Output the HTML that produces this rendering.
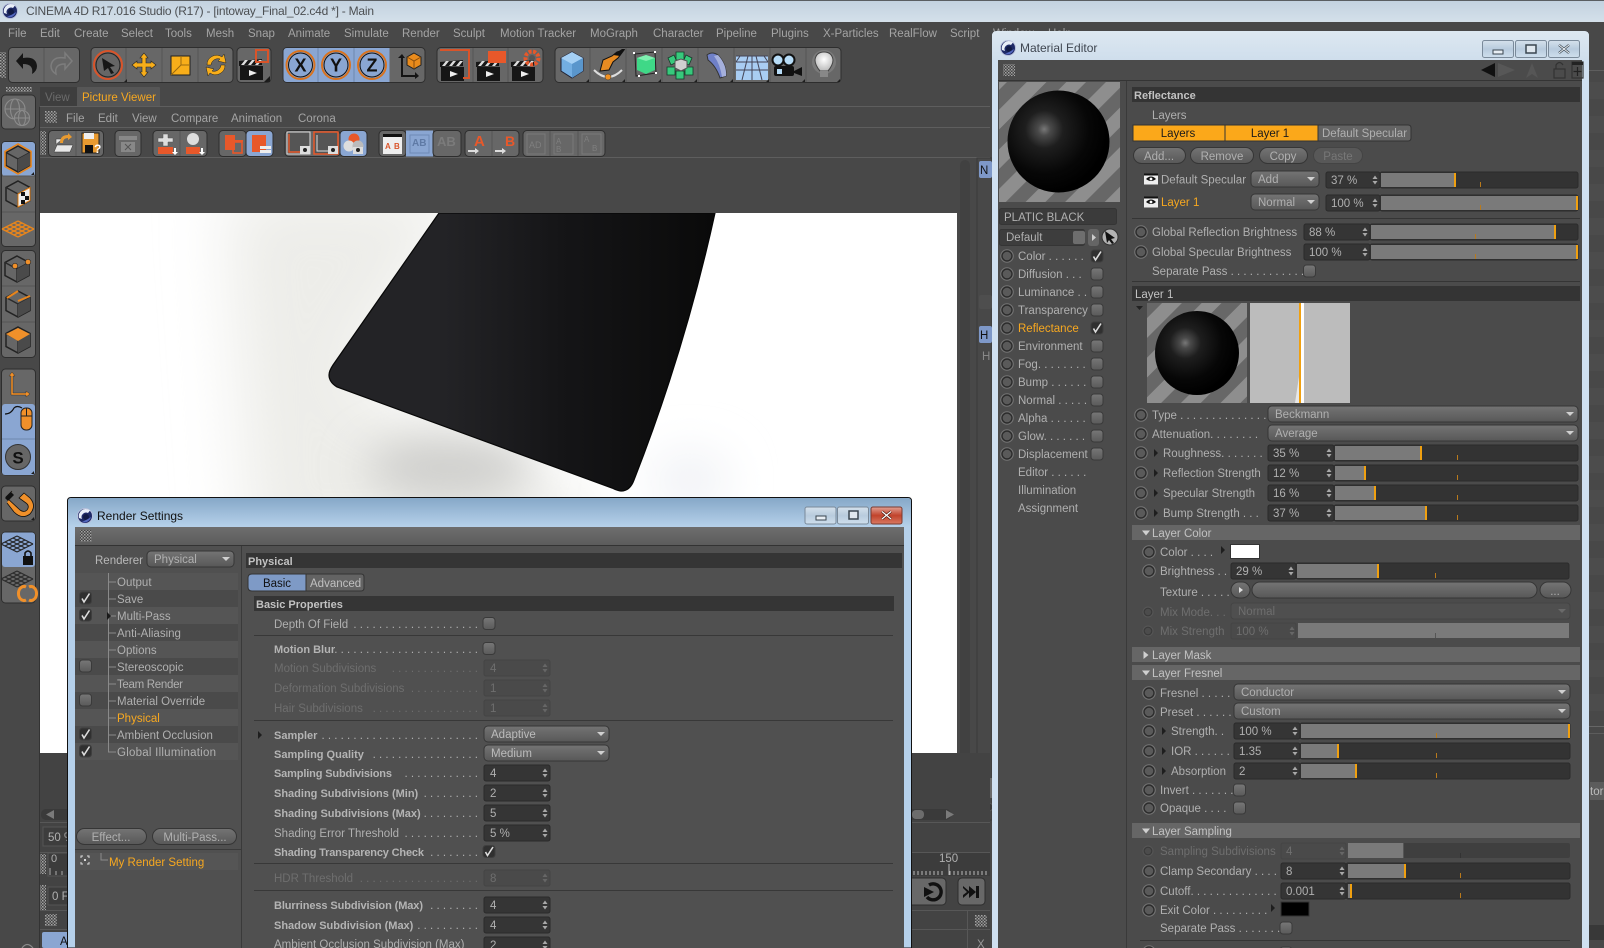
<!DOCTYPE html>
<html><head><meta charset="utf-8"><title>CINEMA 4D</title>
<style>
html,body{margin:0;padding:0;background:#484848;overflow:hidden}
svg{display:block;position:absolute;left:0;top:0}
text{font-family:"Liberation Sans",sans-serif;font-size:11.5px;fill:#b0b0b0}
.m{fill:#a4a4a4}.o{fill:#f7a820}.dim{fill:#6e6e6e}.b{font-weight:bold;font-size:11px;fill:#b4b4b4}
.h{fill:#c2c2c2}.dk{fill:#161616}
.tb{fill:#676767;stroke:#2e2e2e;stroke-width:1}
.dv{stroke:#565656;stroke-width:1}
.fd{fill:#353535;stroke:#2a2a2a}.fx{fill:#4a4a4a;stroke:#444}
.sd{fill:#333;stroke:#2b2b2b}.sf{fill:#7a7a7a}.sh{fill:#f0a010}.st{fill:#b97a1c}
.dp{fill:url(#gd);stroke:#363636}.pl{fill:url(#gd);stroke:#363636}
.hd{fill:#343434}.hl{fill:#666}
.sp{stroke:#353535;stroke-width:1}
</style></head><body>
<svg width="1604" height="948" viewBox="0 0 1604 948" xmlns="http://www.w3.org/2000/svg">
<defs>
<linearGradient id="gd" x1="0" y1="0" x2="0" y2="1"><stop offset="0" stop-color="#747474"/><stop offset="1" stop-color="#585858"/></linearGradient>
<linearGradient id="gc" x1="0" y1="0" x2="0" y2="1"><stop offset="0" stop-color="#777"/><stop offset="1" stop-color="#5a5a5a"/></linearGradient>
<linearGradient id="tt" x1="0" y1="0" x2="0" y2="1"><stop offset="0" stop-color="#c2d1df"/><stop offset="1" stop-color="#d4e0ea"/></linearGradient>
<linearGradient id="tm" x1="0" y1="0" x2="0" y2="1"><stop offset="0" stop-color="#dde8f1"/><stop offset="1" stop-color="#cfdeec"/></linearGradient>
<linearGradient id="tr" x1="0" y1="0" x2="0" y2="1"><stop offset="0" stop-color="#86a8c8"/><stop offset="1" stop-color="#b6d1ea"/></linearGradient>
<linearGradient id="tl" x1="0" y1="0" x2="0" y2="1"><stop offset="0" stop-color="#6e6e6e"/><stop offset="1" stop-color="#5c5c5c"/></linearGradient>
<linearGradient id="wb" x1="0" y1="0" x2="0" y2="1"><stop offset="0" stop-color="#d5e1ec"/><stop offset=".5" stop-color="#b8cbdd"/><stop offset="1" stop-color="#cfdfed"/></linearGradient>
<linearGradient id="wr" x1="0" y1="0" x2="0" y2="1"><stop offset="0" stop-color="#e2a194"/><stop offset=".5" stop-color="#c1432c"/><stop offset="1" stop-color="#d97a63"/></linearGradient>
<linearGradient id="bl" x1="0" y1="0" x2="1" y2="0"><stop offset="0" stop-color="#232326"/><stop offset=".3" stop-color="#232326"/><stop offset=".6" stop-color="#151517"/><stop offset="1" stop-color="#0a0a0a"/></linearGradient>
<radialGradient id="sph" cx=".36" cy=".38" r=".62"><stop offset="0" stop-color="#787878"/><stop offset=".1" stop-color="#4a4a4a"/><stop offset=".3" stop-color="#1e1e1e"/><stop offset=".7" stop-color="#070707"/><stop offset="1" stop-color="#000"/></radialGradient>
<radialGradient id="bulb" cx=".5" cy=".4" r=".6"><stop offset="0" stop-color="#fff"/><stop offset="1" stop-color="#bbb"/></radialGradient>
<pattern id="st" width="28" height="28" patternUnits="userSpaceOnUse" patternTransform="rotate(45)"><rect width="28" height="28" fill="#676767"/><rect width="14" height="28" fill="#8e8e8e"/></pattern>
<pattern id="gp" width="3" height="3" patternUnits="userSpaceOnUse"><rect width="3" height="3" fill="#444"/><rect width="1.5" height="1.5" fill="#a5a5a5"/><rect x="1.5" y="1.5" width="1.5" height="1.5" fill="#8a8a8a"/></pattern>
<filter id="bl1" x="-50%" y="-50%" width="200%" height="200%"><feGaussianBlur stdDeviation="32"/></filter>
<filter id="bl2" x="-60%" y="-80%" width="220%" height="260%"><feGaussianBlur stdDeviation="22"/></filter>
<g id="rd"><circle r="6.8" fill="#747474"/><circle r="5" fill="#5a5a5a" stroke="#2c2c2c" stroke-width="1.4"/></g>
<g id="rx"><circle r="5.5" fill="#565656"/><circle r="3.8" fill="#4c4c4c" stroke="#3a3a3a" stroke-width="1.2"/></g>
<g id="cb"><rect x="-6" y="-6" width="12" height="12" rx="3" fill="url(#gc)" stroke="#3a3a3a"/></g>
<g id="ck"><rect x="-6" y="-6" width="12" height="12" rx="3" fill="#303030" stroke="#3e3e3e"/><path d="M-3.5 .5L-1.5 4L4 -4.5" fill="none" stroke="#ddd" stroke-width="1.6"/></g>
<g id="sp"><path d="M-2.5 -1L0 -4.5L2.5 -1ZM-2.5 1L0 4.5L2.5 1Z" fill="#a8a8a8"/></g>
<g id="spx"><path d="M-2.5 -1L0 -4.5L2.5 -1ZM-2.5 1L0 4.5L2.5 1Z" fill="#666"/></g>
<g id="dd"><path d="M-4 -2H4L0 2Z" fill="#d0d0d0"/></g>
<g id="ddx"><path d="M-4 -2H4L0 2Z" fill="#6a6a6a"/></g>
<g id="ar"><path d="M-2 -4L2 0L-2 4Z" fill="#1e1e1e"/></g>
<g id="trd"><path d="M-4 -2.5H4L0 2.5Z" fill="#d0d0d0"/></g>
<g id="trr"><path d="M-2.5 -4L2.5 0L-2.5 4Z" fill="#d0d0d0"/></g>
<g id="eye"><rect x="-7" y="-5.5" width="14" height="11" fill="#eee"/><path d="M-7 -5.5H7V-3.5H-7Z" fill="#111"/><path d="M-5 0Q0 -5 5 0Q0 4 -5 0Z" fill="#111"/><circle r="1.4" fill="#fff"/></g>
<g id="logo"><circle r="7.5" fill="#1f2a66"/><circle r="7.5" fill="none" stroke="#b8c0dc" stroke-width="1"/><path d="M-6 2A7 7 0 0 1 5 -5.5L3 -3A4.5 4.5 0 0 0 -3 3Z" fill="#e8eef8"/><circle cx="1" cy="1" r="3" fill="#111a44"/><path d="M-3 6A7 7 0 0 0 6 1L3 3Z" fill="#5468c0"/></g>
<g id="cube"><path d="M0 -13L12 -6.5V6.5L0 13L-12 6.5V-6.5Z" fill="#666" stroke="#222" stroke-width="1.5"/><path d="M-12 -6.5L0 0L12 -6.5M0 0V13" fill="none" stroke="#2a2a2a" stroke-width="1.4"/><path d="M0 0L12 -6.5V6.5L0 13Z" fill="#4a4a4a"/></g>
<g id="gridp" fill="none"><path d="M-16 0L0-8M-12 2L4-6M-8 4L8-4M-4 6L12-2M0 8L16 0M-16 0L0 8M-12-2L4 6M-8-4L8 4M-4-6L12 2M0-8L16 0"/></g>
<g id="clap"><rect x="-11" y="-2" width="23" height="14" fill="#161616"/><path d="M-12 -7L11 -9V-3L-12 -2Z" fill="#161616"/><path d="M-10 -3L-6 -8H-3L-7 -3ZM-3 -3L1 -8H4L0 -3ZM4 -3L8 -8H11L7 -3Z" fill="#ddd"/><path d="M-2 2L6 5L-2 8Z" fill="#eee"/></g>
<g id="mn"><rect x="-15.5" y="-8.5" width="31" height="17" rx="2" fill="url(#wb)" stroke="#7a8a9a"/></g>
<g id="mnr"><rect x="-15.5" y="-8.5" width="31" height="17" rx="2" fill="url(#wr)" stroke="#7a3a30"/></g>
</defs>

<!-- base -->
<rect width="1604" height="948" fill="#484848"/>
<rect width="1604" height="22" fill="url(#tt)"/><rect width="1604" height="1" fill="#5a5e62"/>
<use href="#logo" x="10" y="11"/>
<text x="26" y="15" textLength="348" style="font-size:12px;fill:#4c4f52">CINEMA 4D R17.016 Studio (R17) - [intoway_Final_02.c4d *] - Main</text>
<g>
<text class="m" x="8" y="37">File</text><text class="m" x="40" y="37">Edit</text><text class="m" x="74" y="37">Create</text><text class="m" x="121" y="37">Select</text><text class="m" x="165" y="37">Tools</text><text class="m" x="206" y="37">Mesh</text><text class="m" x="248" y="37">Snap</text><text class="m" x="288" y="37">Animate</text><text class="m" x="344" y="37">Simulate</text><text class="m" x="402" y="37">Render</text><text class="m" x="453" y="37">Sculpt</text><text class="m" x="500" y="37">Motion Tracker</text><text class="m" x="590" y="37">MoGraph</text><text class="m" x="653" y="37">Character</text><text class="m" x="716" y="37">Pipeline</text><text class="m" x="771" y="37">Plugins</text><text class="m" x="823" y="37">X-Particles</text><text class="m" x="889" y="37">RealFlow</text><text class="m" x="950" y="37">Script</text><text class="m" x="993" y="37">Window</text><text class="m" x="1048" y="37">Help</text>
</g>

<!-- main toolbar -->
<rect x="0" y="52" width="6" height="26" fill="url(#gp)"/>
<rect class="tb" x="8.5" y="47.5" width="71" height="35" rx="4"/><line class="dv" x1="44" y1="48" x2="44" y2="82"/>
<path d="M16 61L23 53V58Q36 56 37 66Q37 71 32 74Q34 64 23 64V69Z" fill="#161616"/>
<path d="M72 61L65 53V58Q52 56 51 66Q51 71 56 74Q54 64 65 64V69Z" fill="none" stroke="#7d7d7d" stroke-width="1.5"/>
<rect class="tb" x="91" y="47.5" width="142" height="35" rx="4"/><path class="dv" d="M126 48V82M162 48V82M198 48V82"/>
<circle cx="108" cy="65" r="14" fill="#666" stroke="#d9542a" stroke-width="2"/><circle cx="108" cy="65" r="12" fill="none" stroke="#222" stroke-width="1"/>
<path d="M102 58L115 66L110 67L114 73L111 74L108 68L104 71Z" fill="#161616"/>
<path d="M144 53L148 58H146V63H151V61L156 65L151 69V67H146V72H148L144 77L140 72H142V67H137V69L132 65L137 61V63H142V58H140Z" fill="#f8ae1a" stroke="#222" stroke-width=".6"/>
<rect x="171" y="56" width="19" height="19" fill="#f8ae1a" stroke="#222"/><path d="M171 75L181 65V56M181 65H190" fill="none" stroke="#9a6a10" stroke-width="1"/>
<path d="M207 65A9.5 9.5 0 0 1 222 57L224 54L226 63L218 61L220 59A7 7 0 0 0 211 65ZM225 65A9.5 9.5 0 0 1 210 73L208 76L206 67L214 69L212 71A7 7 0 0 0 221 65Z" fill="#f8ae1a" stroke="#222" stroke-width=".5"/>
<rect class="tb" x="237" y="47.5" width="34" height="35" rx="4"/>
<use href="#clap" x="251" y="68"/><rect x="256" y="50" width="12" height="12" fill="none" stroke="#d9542a" stroke-width="2"/>
<path d="M264 82L270 82L270 76Z" fill="#1a1a1a"/>
<rect class="tb" x="283" y="47.5" width="142" height="35" rx="4"/>
<path d="M389.500 48V82H287Q283.500 82 283.500 78V52Q283.500 48 287 48Z" fill="#8aa6d2"/><path class="dv" d="M318 48V82M354 48V82" style="stroke:#6f88ad"/>
<g fill="none" stroke="#d9731f" stroke-width="2"><circle cx="300.5" cy="65" r="14"/><circle cx="336" cy="65" r="14"/><circle cx="372" cy="65" r="14"/></g>
<g fill="none" stroke="#111" stroke-width="1"><circle cx="300.5" cy="65" r="12"/><circle cx="336" cy="65" r="12"/><circle cx="372" cy="65" r="12"/></g>
<text x="300.5" y="71.5" text-anchor="middle" style="font-size:18px;font-weight:bold;fill:#111">X</text><text x="336" y="71.5" text-anchor="middle" style="font-size:18px;font-weight:bold;fill:#111">Y</text><text x="372" y="71.5" text-anchor="middle" style="font-size:18px;font-weight:bold;fill:#111">Z</text>
<path d="M398 58L402 54L405 58H403V75H415V72L419 76L415 79V77H401V58Z" fill="#141414"/>
<path d="M414 53L421 57V65L414 69L407 65V57Z" fill="#e98b1c" stroke="#222"/><path d="M407 57L414 61L421 57M414 61V69" fill="none" stroke="#8a4e0c"/>
<rect class="tb" x="437" y="47.5" width="106" height="35" rx="4"/><path class="dv" d="M473 48V82M508 48V82"/>
<use href="#clap" x="452" y="69"/><path d="M440 50H469V78H463" fill="none" stroke="#d9542a" stroke-width="2"/>
<use href="#clap" x="488" y="69"/><rect x="488" y="51" width="18" height="12" fill="#e8582a"/>
<use href="#clap" x="523" y="69"/><circle cx="532" cy="58" r="6.5" fill="none" stroke="#e8582a" stroke-width="4" stroke-dasharray="3 1.5"/><circle cx="532" cy="58" r="3" fill="#555"/>
<rect class="tb" x="555" y="47.5" width="286" height="35" rx="4"/><path class="dv" d="M590 48V82M626 48V82M662 48V82M698 48V82M734 48V82M770 48V82M806 48V82"/>
<path d="M572 52L583 58V71L572 78L561 71V58Z" fill="#73aee2" stroke="#223"/><path d="M561 58L572 64L583 58L572 52Z" fill="#a5d0f5"/><path d="M572 64L583 58V71L572 78Z" fill="#5a96cc"/>
<path d="M600 71L603 60L612 56L617 52L624 50L618 58L613 62L609 70Z" fill="#e88b22" stroke="#111"/><path d="M613 55L622 49H625L620 56Z" fill="#111"/>
<path d="M594 70Q608 84 622 70" fill="none" stroke="#ddd" stroke-width="2"/><circle cx="608" cy="77" r="3" fill="#f09020" stroke="#333" stroke-width=".5"/>
<path d="M635 54L655 52L656 73L636 76Z" fill="none" stroke="#222"/><path d="M637 58L646 55L655 58V70L646 74L637 70Z" fill="#3fd887"/><path d="M637 58L646 61L655 58L646 55Z" fill="#7ff0b0"/>
<g fill="#fff"><rect x="633" y="52" width="2" height="2"/><rect x="654" y="51" width="2" height="2"/><rect x="655" y="72" width="2" height="2"/><rect x="638" y="75" width="2" height="2"/></g>
<g fill="#37c97c" stroke="#143a28" stroke-width=".8"><path d="M676 52h8v8h-8zM686 55l6 3-3 7-6-3zM668 58l6-3 3 7-6 3zM667 67h8v8h-8zM685 67h8v8h-8zM676 71h8v8h-8z"/></g><path d="M675 61l6-2 6 2v7l-6 3-6-3z" fill="#d0d0d0" stroke="#555"/>
<path d="M707 55Q712 51 718 55Q727 65 726 76L720 78Q716 66 708 60Z" fill="#6f80c8" stroke="#333"/><path d="M718 55Q727 65 726 76L722 77Q720 64 714 56Z" fill="#a5b0dc"/>
<rect x="736" y="56" width="32" height="24" fill="#a9cdf2"/><path d="M736 56H768M736 62H768M736 70H768M748 56L742 80M756 56L762 80M752 56V80M740 56L736 62M764 56L768 62" stroke="#445" fill="none"/>
<circle cx="778" cy="60" r="5.5" fill="#b7dcf7" stroke="#111" stroke-width="2"/><circle cx="789" cy="60" r="5.5" fill="#b7dcf7" stroke="#111" stroke-width="2"/><rect x="774" y="66" width="20" height="10" rx="2" fill="#111"/><path d="M794 71L802 67V76L794 73Z" fill="#111"/><rect x="777" y="69" width="5" height="5" fill="#b7dcf7"/>
<circle cx="824" cy="62" r="12" fill="#7a7a7a"/><path d="M824 52Q832 52 833 60Q833 65 828 71H820Q815 65 815 60Q816 52 824 52Z" fill="url(#bulb)" stroke="#444"/><rect x="820" y="71" width="8" height="6" fill="#888"/>
<g fill="#1e1e1e"><path d="M124 82h3v-3zM267 82h3v-3zM586 82h3v-3zM622 82h3v-3zM658 82h3v-3zM694 82h3v-3zM730 82h3v-3zM766 82h3v-3zM802 82h3v-3zM837 82h3v-3z"/></g>

<!-- tabs -->
<rect x="40" y="87" width="37" height="20" fill="#3e3e3e"/><text x="45" y="101" style="fill:#6b6b6b">View</text>
<path d="M77 107V88Q77 87 78 87H159Q160 87 160 88V107Z" fill="#565656"/><text x="82" y="101" class="o">Picture Viewer</text>
<rect x="40" y="106" width="950" height="1" fill="#5e5e5e"/>
<rect x="45" y="111" width="12" height="12" fill="url(#gp)"/>
<text class="m" x="66" y="122">File</text><text class="m" x="98" y="122">Edit</text><text class="m" x="132" y="122">View</text><text class="m" x="171" y="122">Compare</text><text class="m" x="231" y="122">Animation</text><text class="m" x="298" y="122">Corona</text>
<rect x="40" y="127" width="950" height="1" fill="#5e5e5e"/><rect x="40" y="157" width="950" height="1" fill="#5e5e5e"/>
<rect x="40" y="131" width="6" height="24" fill="url(#gp)"/>

<!-- picture viewer toolbar -->
<rect class="tb" x="48.5" y="130.5" width="55" height="26" rx="4"/><line class="dv" x1="76" y1="131" x2="76" y2="156"/>
<path d="M54 152L57 145H73L70 152ZM56 144V139H62" fill="#e8e8e8" stroke="#333" stroke-width=".5"/><path d="M60 143Q60 135 68 135V133L72 137L68 140V138Q63 138 63 143Z" fill="#e89a30"/>
<rect x="82" y="133" width="17" height="20" fill="#e89a30" stroke="#222"/><rect x="84" y="133" width="10" height="6" fill="#eee"/><rect x="85" y="145" width="8" height="8" fill="#111"/><text x="94" y="153" style="font-size:12px;font-weight:bold;fill:#fff">?</text>
<rect class="tb" x="115" y="130.5" width="26" height="26" rx="4"/>
<g fill="#888"><rect x="119" y="136" width="18" height="4"/><rect x="121" y="142" width="14" height="10"/></g><path d="M125 150l6-6M125 144l6 6" stroke="#555"/>
<rect class="tb" x="153" y="130.5" width="54" height="26" rx="4"/><line class="dv" x1="180" y1="131" x2="180" y2="156"/>
<path d="M163 134h5v4h5v4h-5v4h-5v-4h-5v-4h5z" fill="#ddd" stroke="#555" stroke-width=".5"/><rect x="158" y="147" width="15" height="7" fill="#e8582a"/><path d="M174 148v4h-2l3 3 3-3h-2v-4z" fill="#fff"/>
<circle cx="193" cy="139" r="6" fill="#ddd"/><rect x="186" y="147" width="14" height="7" fill="#e8582a"/><path d="M201 148v4h-2l3 3 3-3h-2v-4z" fill="#fff"/>
<rect class="tb" x="219" y="130.5" width="27" height="26" rx="4"/><rect x="246" y="130.5" width="27" height="26" rx="4" fill="#8aa6d2" stroke="#2e2e2e"/>
<path d="M225 135H235V150H225Z" fill="#e8582a"/><rect x="233" y="142" width="9" height="11" fill="none" stroke="#e8582a" stroke-width="1.6"/><rect x="232" y="140" width="11" height="2" fill="#e8582a"/>
<rect x="252" y="135" width="14" height="17" fill="#e8582a"/><rect x="260" y="146" width="11" height="3" fill="#eee"/><rect x="260" y="150" width="11" height="3" fill="#eee"/>
<rect class="tb" x="285" y="130.5" width="55" height="26" rx="4"/><rect x="340" y="130.5" width="27" height="26" rx="4" fill="#8aa6d2" stroke="#2e2e2e"/>
<rect x="287" y="132" width="23" height="22" fill="#555" stroke="#ddd" stroke-width="1"/><path d="M289 134V152H300" fill="none" stroke="#e8582a" stroke-width="1.4"/><rect x="300" y="146" width="10" height="8" fill="#ddd"/><circle cx="305" cy="150" r="2" fill="#222"/>
<rect x="314" y="132" width="24" height="22" fill="#555" stroke="#e8582a" stroke-width="1.5"/><path d="M317 135V151H328" fill="none" stroke="#ddd" stroke-width="1"/><rect x="328" y="146" width="10" height="8" fill="#ddd"/><circle cx="333" cy="150" r="2" fill="#222"/>
<circle cx="354" cy="139" r="5.5" fill="#e8582a"/><circle cx="349" cy="146" r="5.5" fill="#ddd"/><circle cx="358" cy="146" r="5.5" fill="#bbb"/><rect x="353" y="147" width="10" height="7" fill="#ddd"/><circle cx="358" cy="150" r="2" fill="#222"/>
<rect class="tb" x="379" y="130.5" width="27" height="26" rx="4"/><rect x="406" y="130.5" width="27" height="26" fill="#8aa6d2"/><rect class="tb" x="433" y="130.5" width="28" height="26" rx="4"/>
<rect x="383" y="134" width="19" height="20" fill="#eee"/><rect x="383" y="134" width="19" height="3" fill="#111"/><text x="385" y="149" style="font-size:8px;font-weight:bold;fill:#d9542a">A</text><text x="394" y="149" style="font-size:8px;font-weight:bold;fill:#d9542a">B</text>
<rect x="410" y="135" width="19" height="18" fill="none" stroke="#6f8ab5"/><text x="412" y="146" style="font-size:10px;fill:#5f7aa5;font-weight:bold">AB</text>
<text x="437" y="146" style="font-size:13px;font-weight:bold;fill:#7b7b7b">AB</text>
<rect class="tb" x="465" y="130.5" width="54" height="26" rx="4"/><line class="dv" x1="492" y1="131" x2="492" y2="156"/>
<text x="474" y="146" style="font-size:15px;font-weight:bold;fill:#e8582a">A</text><path d="M468 150h7v-2l4 3-4 3v-2h-7z" fill="#ddd"/>
<text x="505" y="146" style="font-size:14px;font-weight:bold;fill:#e8582a">B</text><path d="M495 150h7v-2l4 3-4 3v-2h-7z" fill="#ddd"/>
<rect class="tb" x="523" y="130.5" width="82" height="26" rx="4"/><path class="dv" d="M550 131V156M578 131V156"/>
<g fill="none" stroke="#7a7a7a"><rect x="527" y="134" width="18" height="20"/><rect x="554" y="134" width="19" height="20"/><rect x="582" y="134" width="19" height="20"/></g>
<text x="529" y="148" style="font-size:9px;fill:#7f7f7f">AD</text><text x="556" y="144" style="font-size:8px;fill:#7f7f7f">A</text><text x="556" y="152" style="font-size:8px;fill:#7f7f7f">B</text><text x="584" y="142" style="font-size:8px;fill:#7f7f7f">A</text><text x="592" y="151" style="font-size:8px;fill:#7f7f7f">B</text>

<!-- left column -->
<rect x="6" y="87" width="26" height="5" fill="url(#gp)"/>
<rect x="1.5" y="95" width="34" height="34" rx="4" class="tb"/>
<g fill="none" stroke="#8b8b8b" stroke-width="1.1"><circle cx="15" cy="109" r="10"/><ellipse cx="15" cy="109" rx="4.5" ry="10"/><path d="M5 109H25"/><circle cx="22" cy="118" r="7.5" fill="#686868"/><ellipse cx="22" cy="118" rx="3.5" ry="7.5"/><path d="M14.5 118H29.5"/></g>
<rect x="1.5" y="141.5" width="34" height="105" rx="4" class="tb"/><rect x="2" y="142" width="33" height="34" rx="3" fill="#8aa6d2"/><path class="dv" d="M2 176H35M2 212H35"/>
<use href="#cube" x="18" y="159"/><path d="M18 144L31 151.5V166.500L18 174L5 166.500V151.500Z" fill="none" stroke="#e8851c" stroke-width="1.6"/>
<path d="M31 175h3v-3z" fill="#1a1a1a"/>
<use href="#cube" x="18" y="194"/><path d="M18 194L30 187.500V200.500L18 207Z" fill="#eee" stroke="#e8851c"/><path d="M21 192h4v4h-4zM25 196h4v4h-4zM21 200h4v4h-4z" fill="#111"/>
<use href="#gridp" x="18" y="229" stroke="#e8851c" stroke-width="1.4"/>
<rect x="1.5" y="250.500" width="34" height="107" rx="4" class="tb"/><path class="dv" d="M2 286H35M2 322H35"/>
<use href="#cube" x="17" y="269"/><circle cx="15" cy="266" r="2.700" fill="#f0902a" stroke="#222" stroke-width=".6"/><circle cx="28" cy="262" r="2.700" fill="#f0902a" stroke="#222" stroke-width=".6"/>
<use href="#cube" x="18" y="304"/><path d="M7 298L18 291M18 301L30 296" stroke="#e8851c" stroke-width="2"/>
<use href="#cube" x="18" y="340"/><path d="M18 328L30 334L18 341L6 334Z" fill="#f0902a"/>
<rect x="1.5" y="369" width="34" height="106" rx="4" class="tb"/><rect x="2" y="404" width="33" height="71" rx="3" fill="#8aa6d2"/><line class="dv" x1="2" y1="439" x2="35" y2="439" style="stroke:#6f88ad"/>
<path d="M9 376L12 372L15 376H13V393H26V391L30 394L26 397V395H11V376Z" fill="#f0902a" stroke="#222" stroke-width=".4"/>
<path d="M5 414Q11 414 14 408Q17 405 22 408" fill="none" stroke="#111" stroke-width="1.2"/><rect x="21" y="408" width="11" height="22" rx="5" fill="#f0902a" stroke="#222"/><path d="M21 416H32M26.500 408V416" stroke="#222"/>
<circle cx="18" cy="457" r="12.500" fill="#666" stroke="#333"/><text x="18" y="463.500" text-anchor="middle" style="font-size:17px;font-weight:bold;fill:#111">S</text>
<path d="M31 474h3v-3z" fill="#1a1a1a"/>
<rect x="1.5" y="486" width="34" height="35" rx="4" class="tb"/>
<path d="M12 491L6 497L20 510Q24 513 27 510Q30 506 26 503L19 498L24 493L30 498Q37 506 30 514Q22 520 14 512L7 503" fill="#f0902a" stroke="#111" stroke-width=".8"/><path d="M5 498L11 492L14 495L8 501Z" fill="#111"/>
<path d="M31 520h3v-3z" fill="#1a1a1a"/>
<rect x="1.5" y="532" width="34" height="71" rx="4" class="tb"/><rect x="2" y="532.500" width="33" height="34.500" rx="3" fill="#8aa6d2"/>
<use href="#gridp" x="17" y="544" stroke="#222" stroke-width="1.1"/><rect x="23" y="556" width="10" height="9" fill="#111"/><path d="M25 556V553Q28 549 31 553V556" fill="none" stroke="#111" stroke-width="1.600"/>
<use href="#gridp" x="17" y="579" stroke="#2a2a2a" stroke-width="1.1"/><path d="M26 587A5.500 7 0 1 0 26 600M29 587A5.500 7 0 1 1 29 600" fill="none" stroke="#f0902a" stroke-width="3"/>
<rect x="39" y="107" width="1" height="841" fill="#333"/>

<!-- viewport -->
<rect x="40" y="213" width="917" height="540" fill="#fff"/>
<clipPath id="vp"><rect x="40" y="213" width="917" height="540"/></clipPath>
<g clip-path="url(#vp)">
<path d="M225 190L470 190L350 380L590 500L590 560L250 560Z" fill="#edede9" filter="url(#bl1)"/>
<ellipse cx="450" cy="468" rx="85" ry="30" fill="#cdcdcb" filter="url(#bl2)"/>
<ellipse cx="690" cy="480" rx="40" ry="30" fill="#f1f3f6" filter="url(#bl2)"/>
<path d="M439 213H715Q685 350 634 480Q630 491 621 491Q618 491 612 488L337 387Q329 382 329 375Q329 371 333 365L439 213Z" fill="url(#bl)" stroke="#070707" stroke-width="1.200"/>
</g>

<!-- right of viewport -->
<rect x="960" y="160" width="10" height="645" rx="5" fill="#414141"/>
<rect x="977" y="158" width="15" height="662" fill="#484848" stroke="#3a3a3a"/>
<rect x="985" y="778" width="7" height="20" fill="#6a6a6a"/><circle cx="989" cy="807" r="4" fill="#3a3a3a" stroke="#5a5a5a"/>
<rect x="979" y="161" width="13" height="17" rx="2" fill="#7e98c8"/><text x="980" y="174" style="fill:#111">N</text>
<rect x="979" y="326" width="13" height="17" rx="2" fill="#7e98c8"/><text x="980" y="339" style="fill:#111">H</text>
<rect x="979" y="295" width="13" height="14" rx="2" fill="#4e4e4e"/><text x="982" y="360" style="fill:#888">H</text>
<!-- lower dark -->
<rect x="40" y="753" width="950" height="195" fill="#434343"/>
<rect x="41" y="809" width="910" height="11" rx="5" fill="#3a3a3a"/><path d="M54 810L46 814.500L54 819Z" fill="#7a7a7a"/><rect x="912" y="810" width="12" height="9" rx="4" fill="#6c6c6c"/><path d="M946 810L954 814.500L946 819Z" fill="#7a7a7a"/>
<rect x="40" y="822" width="950" height="1" fill="#575757"/><rect x="40" y="852" width="950" height="1" fill="#575757"/>
<rect x="43" y="827" width="30" height="19" fill="#3d3d3d" stroke="#555"/><text x="48" y="841">50 %</text>
<rect x="40" y="854" width="6" height="20" fill="url(#gp)"/><rect x="48" y="853" width="30" height="23" fill="#3c3c3c" stroke="#555"/><text x="51" y="862" style="font-size:11px">0</text><path d="M50 875V868M56 875V871M62 875V871" stroke="#aaa"/>
<rect x="40" y="885" width="6" height="26" fill="url(#gp)"/><rect x="48" y="887" width="30" height="18" fill="#3c3c3c" stroke="#555"/><text x="52" y="900">0 F</text>
<rect x="40" y="910" width="950" height="1" fill="#575757"/><rect x="45" y="914" width="12" height="12" fill="url(#gp)"/><rect x="40" y="929" width="950" height="1" fill="#575757"/>
<rect x="42" y="932" width="30" height="16" rx="2" fill="#8aa6d2"/><text x="60" y="945" style="fill:#111">A</text>
<path d="M22 948Q27 941 33 948" fill="none" stroke="#8a8a8a" stroke-width="1.200"/>
<rect x="912" y="853" width="78" height="23" fill="#3c3c3c"/><text x="939" y="862" style="fill:#b0b0b0">150</text>
<path d="M914 871V875M918 871V875M922 871V875M926 871V875M930 871V875M934 871V875M938 871V875M942 871V875M949 864V875M950 871V875M954 871V875M958 871V875M962 871V875M966 871V875M970 871V875M974 871V875M978 871V875M982 871V875M986 871V875" stroke="#b8b8b8"/>
<rect x="904" y="878" width="42" height="27" rx="4" fill="#686868" stroke="#2e2e2e"/><path d="M929 885A8 8 0 1 1 927 897" fill="none" stroke="#111" stroke-width="3.400"/><path d="M924 887L934 892L924 897Z" fill="#111"/>
<rect x="958" y="878" width="27" height="27" rx="4" fill="#686868" stroke="#2e2e2e"/><path d="M963 886L970 892L963 898V895L967 892L963 888ZM969 886L976 892L969 898ZM976 886H979V898H976Z" fill="#111"/>
<rect x="967" y="910" width="1" height="38" fill="#575757"/><rect x="975" y="915" width="12" height="12" fill="url(#gp)"/><text x="977" y="948" style="fill:#999">X</text>

<!-- far right strip -->
<rect x="1589" y="22" width="15" height="926" fill="#484848"/>
<rect x="1589" y="70" width="15" height="1" fill="#5e5e5e"/>
<g fill="#4c4c4c"><rect x="1589" y="82" width="15" height="17"/><rect x="1589" y="116" width="15" height="17"/><rect x="1589" y="150" width="15" height="17"/><rect x="1589" y="184" width="15" height="17"/><rect x="1589" y="218" width="15" height="17"/><rect x="1589" y="252" width="15" height="17"/><rect x="1589" y="286" width="15" height="17"/><rect x="1589" y="320" width="15" height="17"/><rect x="1589" y="354" width="15" height="17"/><rect x="1589" y="388" width="15" height="17"/><rect x="1589" y="422" width="15" height="17"/><rect x="1589" y="456" width="15" height="17"/><rect x="1589" y="490" width="15" height="17"/><rect x="1589" y="524" width="15" height="17"/><rect x="1589" y="558" width="15" height="17"/><rect x="1589" y="592" width="15" height="17"/><rect x="1589" y="626" width="15" height="17"/><rect x="1589" y="660" width="15" height="17"/><rect x="1589" y="694" width="15" height="17"/></g>
<rect x="1589" y="726" width="15" height="1" fill="#666"/><rect x="1589" y="733" width="15" height="1" fill="#5c5c5c"/>
<rect x="1590" y="782" width="14" height="18" fill="#5c5c5c"/><text x="1590" y="795" style="fill:#bbb">tor</text>
<rect x="1589" y="925" width="15" height="15" fill="#383838"/>

<!-- MATERIAL EDITOR WINDOW -->
<path d="M992 948V36Q992 31 997 31H1584Q1589 31 1589 36V948Z" fill="#cfe0f1"/>
<path d="M992 60V36Q992 31 997 31H1584Q1589 31 1589 36V60Z" fill="url(#tm)"/>
<use href="#logo" x="1008" y="48"/>
<text x="1020" y="52" style="font-size:12px;fill:#3f4650">Material Editor</text>
<use href="#mn" x="1498" y="49"/><use href="#mn" x="1531" y="49"/><use href="#mn" x="1564" y="49"/>
<rect x="1493" y="50" width="10" height="4" fill="#e8eef4" stroke="#3a4650"/><rect x="1526" y="45" width="10" height="8" fill="#dfe7ee" stroke="#3a4650" stroke-width="1.500"/><path d="M1559 45L1569 53M1569 45L1559 53" stroke="#3a4650" stroke-width="2.400"/><path d="M1559 45L1569 53M1569 45L1559 53" stroke="#f2f6fa" stroke-width=".9"/>
<rect x="998" y="60" width="584" height="888" fill="#4b4b4b"/>
<rect x="998" y="80" width="584" height="1" fill="#343434"/>
<rect x="1003" y="64" width="12" height="12" fill="url(#gp)"/>
<path d="M1481 70L1495 63V77Z" fill="#111"/><path d="M1498 63L1515 70L1498 77Z" fill="#575757"/><path d="M1532 63L1526 78L1532 74L1538 78Z" fill="#565656"/>
<rect x="1554" y="69" width="11" height="9" fill="none" stroke="#323232" stroke-width="1.200"/><path d="M1556 69V65Q1559.500 60 1563 65" fill="none" stroke="#323232" stroke-width="1.200"/>
<rect x="1572" y="62" width="11" height="16" fill="none" stroke="#323232" stroke-width="1.200"/><rect x="1572" y="62" width="11" height="3" fill="#222"/><path d="M1577.500 67V76M1573.500 71.500H1581.500" stroke="#222" stroke-width="1.200"/>
<rect x="1126" y="81" width="1" height="867" fill="#3a3a3a"/>

<!-- preview -->
<rect x="999" y="82" width="121" height="120" fill="url(#st)"/>
<circle cx="1058.500" cy="141.500" r="51" fill="url(#sph)"/>
<rect x="999.500" y="208.500" width="117" height="16" rx="2" fill="#3b3b3b" stroke="#353535"/><text x="1004" y="221">PLATIC BLACK</text>
<rect x="999.500" y="229.500" width="85" height="16" rx="2" fill="#3d3d3d" stroke="#353535"/><text x="1006" y="241">Default</text>
<rect x="1073" y="231" width="12" height="13" rx="2" fill="#6e6e6e"/>
<rect x="1088" y="229" width="11" height="17" rx="3" fill="#656565"/><path d="M1092 234L1096 237.500L1092 241Z" fill="#ccc"/>
<circle cx="1110" cy="237" r="8" fill="#b4b4b4" stroke="#333"/><path d="M1105 231L1115 238L1111 239L1114 243L1112 244L1109 240L1107 243Z" fill="#111"/>

<!-- channels -->
<use href="#rd" x="1007" y="256"/><text x="1018" y="260">Color . . . . . .</text><use href="#ck" x="1097" y="256"/>
<use href="#rd" x="1007" y="274"/><text x="1018" y="278">Diffusion . . .</text><use href="#cb" x="1097" y="274"/>
<use href="#rd" x="1007" y="292"/><text x="1018" y="296">Luminance . .</text><use href="#cb" x="1097" y="292"/>
<use href="#rd" x="1007" y="310"/><text x="1018" y="314">Transparency</text><use href="#cb" x="1097" y="310"/>
<use href="#rd" x="1007" y="328"/><text x="1018" y="332" class="o">Reflectance</text><use href="#ck" x="1097" y="328"/>
<use href="#rd" x="1007" y="346"/><text x="1018" y="350">Environment</text><use href="#cb" x="1097" y="346"/>
<use href="#rd" x="1007" y="364"/><text x="1018" y="368">Fog. . . . . . . .</text><use href="#cb" x="1097" y="364"/>
<use href="#rd" x="1007" y="382"/><text x="1018" y="386">Bump . . . . . .</text><use href="#cb" x="1097" y="382"/>
<use href="#rd" x="1007" y="400"/><text x="1018" y="404">Normal . . . . .</text><use href="#cb" x="1097" y="400"/>
<use href="#rd" x="1007" y="418"/><text x="1018" y="422">Alpha . . . . . .</text><use href="#cb" x="1097" y="418"/>
<use href="#rd" x="1007" y="436"/><text x="1018" y="440">Glow. . . . . . .</text><use href="#cb" x="1097" y="436"/>
<use href="#rd" x="1007" y="454"/><text x="1018" y="458">Displacement</text><use href="#cb" x="1097" y="454"/>
<text x="1018" y="476">Editor . . . . . .</text><text x="1018" y="494">Illumination</text><text x="1018" y="512">Assignment</text>

<!-- Reflectance -->
<rect class="hd" x="1132" y="87" width="448" height="15"/><text class="h" x="1134" y="99" style="font-weight:bold;font-size:11px">Reflectance</text>
<text x="1152" y="119">Layers</text>
<rect x="1133" y="125" width="92" height="16" fill="#fba81a" stroke="#333"/><rect x="1225" y="125" width="93" height="16" fill="#fba81a" stroke="#333"/><path d="M1318 125H1408Q1411 125 1411 128V138Q1411 141 1408 141H1318Z" fill="#646464" stroke="#333"/>
<text x="1178" y="137" text-anchor="middle" style="fill:#1a1a1a">Layers</text><text x="1270" y="137" text-anchor="middle" style="fill:#1a1a1a">Layer 1</text><text x="1322" y="137">Default Specular</text>
<rect class="pl" x="1133.500" y="147.500" width="52" height="16" rx="8"/><rect class="pl" x="1190.500" y="147.500" width="63" height="16" rx="8"/><rect class="pl" x="1259.500" y="147.500" width="48" height="16" rx="8"/><rect x="1313.500" y="147.500" width="49" height="16" rx="8" fill="#585858" stroke="#444"/>
<text x="1159" y="160" text-anchor="middle">Add...</text><text x="1222" y="160" text-anchor="middle">Remove</text><text x="1283" y="160" text-anchor="middle">Copy</text><text x="1338" y="160" text-anchor="middle" style="fill:#777">Paste</text>

<use href="#eye" x="1151" y="179"/><text x="1161" y="183.500">Default Specular</text>
<rect class="dp" x="1251" y="171" width="68" height="16" rx="4"/><text x="1258" y="183">Add</text><use href="#dd" x="1311" y="179"/>
<rect class="fd" x="1326" y="172" width="54" height="16" rx="2"/><text x="1331" y="184">37 %</text><use href="#sp" x="1375" y="180"/>
<rect class="sd" x="1380" y="172" width="198" height="16" rx="2"/><rect class="sf" x="1381" y="173" width="73" height="14"/><rect class="sh" x="1454" y="173" width="2" height="14"/><rect class="st" x="1480" y="182" width="1" height="5"/>
<use href="#eye" x="1151" y="202"/><text x="1161" y="206" class="o">Layer 1</text>
<rect class="dp" x="1251" y="194" width="68" height="16" rx="4"/><text x="1258" y="206">Normal</text><use href="#dd" x="1311" y="202"/>
<rect class="fd" x="1326" y="195" width="54" height="16" rx="2"/><text x="1331" y="207">100 %</text><use href="#sp" x="1375" y="203"/>
<rect class="sd" x="1380" y="195" width="198" height="16" rx="2"/><rect class="sf" x="1381" y="196" width="196" height="14"/><rect class="sh" x="1576" y="196" width="2" height="14"/><rect class="st" x="1480" y="205" width="1" height="5"/>
<rect x="1132" y="218" width="448" height="1" fill="#353535"/>

<use href="#rd" x="1141" y="232"/><text x="1152" y="236">Global Reflection Brightness</text>
<rect class="fd" x="1304" y="224" width="66" height="16" rx="2"/><text x="1309" y="236">88 %</text><use href="#sp" x="1365" y="232"/>
<rect class="sd" x="1370" y="224" width="208" height="16" rx="2"/><rect class="sf" x="1371" y="225" width="183" height="14"/><rect class="sh" x="1554" y="225" width="2" height="14"/><rect class="st" x="1475" y="234" width="1" height="5"/>
<use href="#rd" x="1141" y="252"/><text x="1152" y="256">Global Specular Brightness</text>
<rect class="fd" x="1304" y="244" width="66" height="16" rx="2"/><text x="1309" y="256">100 %</text><use href="#sp" x="1365" y="252"/>
<rect class="sd" x="1370" y="244" width="208" height="16" rx="2"/><rect class="sf" x="1371" y="245" width="206" height="14"/><rect class="sh" x="1576" y="245" width="2" height="14"/><rect class="st" x="1475" y="254" width="1" height="5"/>
<text x="1152" y="275">Separate Pass . . . . . . . . . . . .</text><use href="#cb" x="1309.500" y="271"/>
<rect x="1132" y="281" width="448" height="1" fill="#353535"/>

<rect class="hd" x="1132" y="286" width="448" height="15"/><text class="h" x="1135" y="298">Layer 1</text>
<path d="M1136 306H1143L1139.500 310Z" fill="#222"/>
<rect x="1147" y="303" width="100" height="100" fill="url(#st)"/><circle cx="1197" cy="353" r="42" fill="url(#sph)"/>
<rect x="1250" y="303" width="100" height="100" fill="#bcbcbc"/><rect x="1301" y="303" width="3" height="100" fill="#fff"/><path d="M1295 403L1300 370V403Z" fill="#e8e8e8"/><rect x="1299" y="303" width="2" height="100" fill="#f0a010"/>

<use href="#rd" x="1141" y="415"/><text x="1152" y="419">Type . . . . . . . . . . . . . .</text>
<rect class="dp" x="1268" y="406" width="310" height="16" rx="4"/><text x="1275" y="418">Beckmann</text><use href="#dd" x="1570" y="414"/>
<use href="#rd" x="1141" y="434"/><text x="1152" y="438">Attenuation. . . . . . . .</text>
<rect class="dp" x="1268" y="425" width="310" height="16" rx="4"/><text x="1275" y="437">Average</text><use href="#dd" x="1570" y="433"/>

<use href="#rd" x="1141" y="453"/><use href="#ar" x="1156" y="453"/><text x="1163" y="457">Roughness. . . . . . .</text>
<rect class="fd" x="1268" y="445" width="66" height="16" rx="2"/><text x="1273" y="457">35 %</text><use href="#sp" x="1329" y="453"/>
<rect class="sd" x="1334" y="445" width="244" height="16" rx="2"/><rect class="sf" x="1335" y="446" width="85" height="14"/><rect class="sh" x="1420" y="446" width="2" height="14"/><rect class="st" x="1457" y="455" width="1" height="5"/>
<use href="#rd" x="1141" y="473"/><use href="#ar" x="1156" y="473"/><text x="1163" y="477">Reflection Strength</text>
<rect class="fd" x="1268" y="465" width="66" height="16" rx="2"/><text x="1273" y="477">12 %</text><use href="#sp" x="1329" y="473"/>
<rect class="sd" x="1334" y="465" width="244" height="16" rx="2"/><rect class="sf" x="1335" y="466" width="29" height="14"/><rect class="sh" x="1364" y="466" width="2" height="14"/><rect class="st" x="1457" y="475" width="1" height="5"/>
<use href="#rd" x="1141" y="493"/><use href="#ar" x="1156" y="493"/><text x="1163" y="497">Specular Strength</text>
<rect class="fd" x="1268" y="485" width="66" height="16" rx="2"/><text x="1273" y="497">16 %</text><use href="#sp" x="1329" y="493"/>
<rect class="sd" x="1334" y="485" width="244" height="16" rx="2"/><rect class="sf" x="1335" y="486" width="39" height="14"/><rect class="sh" x="1374" y="486" width="2" height="14"/><rect class="st" x="1457" y="495" width="1" height="5"/>
<use href="#rd" x="1141" y="513"/><use href="#ar" x="1156" y="513"/><text x="1163" y="517">Bump Strength . . .</text>
<rect class="fd" x="1268" y="505" width="66" height="16" rx="2"/><text x="1273" y="517">37 %</text><use href="#sp" x="1329" y="513"/>
<rect class="sd" x="1334" y="505" width="244" height="16" rx="2"/><rect class="sf" x="1335" y="506" width="90" height="14"/><rect class="sh" x="1425" y="506" width="2" height="14"/><rect class="st" x="1457" y="515" width="1" height="5"/>

<rect class="hl" x="1132" y="525" width="448" height="15"/><use href="#trd" x="1146" y="533"/><text class="h" x="1152" y="537">Layer Color</text>
<use href="#rd" x="1149" y="552"/><text x="1160" y="556">Color . . . .</text><use href="#ar" x="1223" y="550"/><rect x="1230.500" y="544.500" width="29" height="14" fill="#fff" stroke="#333"/>
<use href="#rd" x="1149" y="571"/><text x="1160" y="575">Brightness . .</text>
<rect class="fd" x="1231" y="563" width="65" height="16" rx="2"/><text x="1236" y="575">29 %</text><use href="#sp" x="1291" y="571"/>
<rect class="sd" x="1296" y="563" width="273" height="16" rx="2"/><rect class="sf" x="1297" y="564" width="80" height="14"/><rect class="sh" x="1377" y="564" width="2" height="14"/><rect class="st" x="1435" y="573" width="1" height="5"/>
<text x="1160" y="596">Texture . . . . .</text>
<rect class="pl" x="1231" y="582" width="19" height="16" rx="8"/><path d="M1239 587L1243 590L1239 593Z" fill="#ddd"/><rect class="pl" x="1252" y="582" width="285" height="16" rx="8"/><rect class="pl" x="1540" y="582" width="31" height="16" rx="8"/><text x="1555" y="595" text-anchor="middle">...</text>
<use href="#rx" x="1148" y="612"/><text x="1160" y="616" class="dim">Mix Mode. . .</text>
<rect x="1231" y="603" width="339" height="16" rx="3" fill="#4f4f4f" stroke="#444"/><text x="1238" y="615" class="dim">Normal</text><use href="#ddx" x="1562" y="611"/>
<use href="#rx" x="1148" y="631"/><text x="1160" y="635" class="dim">Mix Strength</text>
<rect class="fx" x="1231" y="623" width="65" height="16" rx="2"/><text x="1236" y="635" class="dim">100 %</text><use href="#spx" x="1292" y="631"/>
<rect x="1298" y="623" width="271" height="15" fill="#7a7a7a"/><rect x="1435" y="633" width="1" height="5" fill="#555"/>

<rect class="hl" x="1132" y="647" width="448" height="15"/><use href="#trr" x="1146" y="655"/><text class="h" x="1152" y="659">Layer Mask</text>
<rect class="hl" x="1132" y="665" width="448" height="15"/><use href="#trd" x="1146" y="673"/><text class="h" x="1152" y="677">Layer Fresnel</text>
<use href="#rd" x="1149" y="693"/><text x="1160" y="697">Fresnel . . . . .</text>
<rect class="dp" x="1234" y="684" width="336" height="16" rx="4"/><text x="1241" y="696">Conductor</text><use href="#dd" x="1562" y="692"/>
<use href="#rd" x="1149" y="712"/><text x="1160" y="716">Preset . . . . . .</text>
<rect class="dp" x="1234" y="703" width="336" height="16" rx="4"/><text x="1241" y="715">Custom</text><use href="#dd" x="1562" y="711"/>
<use href="#rd" x="1149" y="731"/><use href="#ar" x="1164" y="731"/><text x="1171" y="735">Strength. .</text>
<rect class="fd" x="1234" y="723" width="66" height="16" rx="2"/><text x="1239" y="735">100 %</text><use href="#sp" x="1295" y="731"/>
<rect class="sd" x="1300" y="723" width="270" height="16" rx="2"/><rect class="sf" x="1301" y="724" width="268" height="14"/><rect class="sh" x="1568" y="724" width="2" height="14"/><rect class="st" x="1436" y="733" width="1" height="5"/>
<use href="#rd" x="1149" y="751"/><use href="#ar" x="1164" y="751"/><text x="1171" y="755">IOR . . . . . . .</text>
<rect class="fd" x="1234" y="743" width="66" height="16" rx="2"/><text x="1239" y="755">1.35</text><use href="#sp" x="1295" y="751"/>
<rect class="sd" x="1300" y="743" width="270" height="16" rx="2"/><rect class="sf" x="1301" y="744" width="36" height="14"/><rect class="sh" x="1337" y="744" width="2" height="14"/><rect class="st" x="1436" y="753" width="1" height="5"/>
<use href="#rd" x="1149" y="771"/><use href="#ar" x="1164" y="771"/><text x="1171" y="775">Absorption</text>
<rect class="fd" x="1234" y="763" width="66" height="16" rx="2"/><text x="1239" y="775">2</text><use href="#sp" x="1295" y="771"/>
<rect class="sd" x="1300" y="763" width="270" height="16" rx="2"/><rect class="sf" x="1301" y="764" width="54" height="14"/><rect class="sh" x="1355" y="764" width="2" height="14"/><rect class="st" x="1436" y="773" width="1" height="5"/>
<use href="#rd" x="1149" y="790"/><text x="1160" y="794">Invert . . . . . . .</text><use href="#cb" x="1239.500" y="790"/>
<use href="#rd" x="1149" y="808"/><text x="1160" y="812">Opaque . . . .</text><use href="#cb" x="1239.500" y="808"/>

<rect class="hl" x="1132" y="823" width="448" height="15"/><use href="#trd" x="1146" y="831"/><text class="h" x="1152" y="835">Layer Sampling</text>
<use href="#rx" x="1148" y="851"/><text x="1160" y="855" class="dim">Sampling Subdivisions</text>
<rect class="fx" x="1281" y="843" width="65" height="16" rx="2"/><text x="1286" y="855" class="dim">4</text><use href="#spx" x="1342" y="851"/>
<rect x="1348" y="843" width="222" height="15" rx="2" fill="#3f3f3f"/><rect class="sf" x="1348" y="843" width="55" height="15"/><rect x="1403" y="843" width="1" height="15" fill="#555"/><rect x="1460" y="853" width="1" height="5" fill="#333"/>
<use href="#rd" x="1149" y="871"/><text x="1160" y="875">Clamp Secondary . . . .</text>
<rect class="fd" x="1281" y="863" width="65" height="16" rx="2"/><text x="1286" y="875">8</text><use href="#sp" x="1342" y="871"/>
<rect class="sd" x="1346" y="863" width="224" height="16" rx="2"/><rect class="sf" x="1348" y="864" width="56" height="14"/><rect class="sh" x="1404" y="864" width="2" height="14"/><rect class="st" x="1460" y="873" width="1" height="5"/>
<use href="#rd" x="1149" y="891"/><text x="1160" y="895">Cutoff. . . . . . . . . . . . . . .</text>
<rect class="fd" x="1281" y="883" width="65" height="16" rx="2"/><text x="1286" y="895">0.001</text><use href="#sp" x="1342" y="891"/>
<rect class="sd" x="1346" y="883" width="224" height="16" rx="2"/><rect class="sf" x="1348" y="884" width="2" height="14"/><rect class="sh" x="1350" y="884" width="2" height="14"/><rect class="st" x="1460" y="893" width="1" height="5"/>
<use href="#rd" x="1149" y="910"/><text x="1160" y="914">Exit Color . . . . . . . . .</text><use href="#ar" x="1273" y="908"/><rect x="1281" y="902" width="28" height="14" fill="#000" stroke="#333"/>
<text x="1160" y="932">Separate Pass . . . . . . . .</text><use href="#cb" x="1286" y="928"/>
<rect x="1140" y="940" width="430" height="1" fill="#353535"/>
<use href="#rd" x="1149" y="952"/><use href="#cb" x="1286" y="953"/>

<!-- RENDER SETTINGS WINDOW -->
<path d="M67.500 948V501Q67.500 497.500 71 497.500H908Q911.500 497.500 911.500 501V948Z" fill="#b5d0ea" stroke="#111"/>
<path d="M68 527V502Q68 498 72 498H907Q911 498 911 502V527Z" fill="url(#tr)"/>
<use href="#logo" x="85" y="516"/>
<text x="97" y="520" style="font-size:12px;fill:#111">Render Settings</text>
<use href="#mn" x="820.500" y="515.500"/><use href="#mn" x="853" y="515.500"/><use href="#mnr" x="886.500" y="515.500"/>
<rect x="816" y="516" width="10" height="4" fill="#e8eef4" stroke="#3a4650"/><rect x="849" y="511" width="9" height="8" fill="#dfe7ee" stroke="#3a4650" stroke-width="1.500"/><path d="M882 511.500L891 519M891 511.500L882 519" stroke="#4a1a10" stroke-width="2.600"/><path d="M882 511.500L891 519M891 511.500L882 519" stroke="#fff" stroke-width="1.200"/>
<rect x="75" y="527" width="829" height="421" fill="#505050"/>
<rect x="75" y="527" width="829" height="18" fill="url(#tl)"/><rect x="75" y="545" width="829" height="1" fill="#333"/>
<rect x="80" y="530" width="12" height="12" fill="url(#gp)"/>
<rect x="241" y="546" width="1" height="402" fill="#3a3a3a"/>
<text x="95" y="564" style="fill:#b8b8b8">Renderer</text>
<rect class="dp" x="147" y="551" width="87" height="16" rx="4"/><text x="154" y="563">Physical</text><use href="#dd" x="226" y="559"/>
<g fill="#555"><rect x="75" y="573" width="163" height="17"/><rect x="75" y="607" width="163" height="17"/><rect x="75" y="641" width="163" height="17"/><rect x="75" y="675" width="163" height="17"/><rect x="75" y="709" width="163" height="17"/><rect x="75" y="743" width="163" height="17"/></g>
<g fill="#4a4a4a"><rect x="75" y="590" width="163" height="17"/><rect x="75" y="624" width="163" height="17"/><rect x="75" y="658" width="163" height="17"/><rect x="75" y="692" width="163" height="17"/><rect x="75" y="726" width="163" height="17"/></g>
<path d="M108.500 573V752H116M108.500 582H116M108.500 599H116M108.500 616H116M108.500 633H116M108.500 650H116M108.500 667H116M108.500 684H116M108.500 701H116M108.500 718H116M108.500 735H116" fill="none" stroke="#8a8a8a"/>
<path d="M107 612L111 616L107 620Z" fill="#1a1a1a"/>
<text x="117" y="586">Output</text><text x="117" y="603">Save</text><text x="117" y="620">Multi-Pass</text><text x="117" y="637">Anti-Aliasing</text><text x="117" y="654">Options</text><text x="117" y="671">Stereoscopic</text><text x="117" y="688" textLength="66">Team Render</text><text x="117" y="705">Material Override</text><text x="117" y="722" class="o">Physical</text><text x="117" y="739">Ambient Occlusion</text><text x="117" y="756" textLength="99">Global Illumination</text>
<use href="#ck" x="85.500" y="598"/><use href="#ck" x="85.500" y="615"/><use href="#cb" x="85.500" y="666"/><use href="#cb" x="85.500" y="700"/><use href="#ck" x="85.500" y="734"/><use href="#ck" x="85.500" y="751"/>
<rect class="pl" x="76.500" y="828.500" width="70" height="16" rx="8"/><rect class="pl" x="152.500" y="828.500" width="84" height="16" rx="8"/>
<text x="111" y="841" text-anchor="middle">Effect...</text><text x="195" y="841" text-anchor="middle">Multi-Pass...</text>
<rect x="75" y="849" width="166" height="1" fill="#3a3a3a"/><rect x="75" y="853" width="163" height="17" fill="#555"/>
<path d="M81 858v-2h2M87 856h2v2M89 862v2h-2M83 864h-2v-2" stroke="#ddd" fill="none"/><rect x="84" y="859" width="2" height="2" fill="#ddd"/>
<path d="M101 853V860H108" fill="none" stroke="#8a8a8a"/><text x="109" y="866" class="o">My Render Setting</text>

<rect x="246" y="553" width="656" height="15" fill="#353535"/><text x="248" y="565" style="font-weight:bold;font-size:11px;fill:#c2c2c2">Physical</text>
<path d="M252 574H306V591H252Q248 591 248 587V578Q248 574 252 574Z" fill="#7e9ac6" stroke="#333"/><text x="277" y="587" text-anchor="middle" style="fill:#111">Basic</text>
<path d="M306 574H361Q364 574 364 577V588Q364 591 361 591H306Z" fill="#636363" stroke="#333"/><text x="310" y="587" style="fill:#c0c0c0">Advanced</text>
<rect x="254" y="596" width="640" height="15" fill="#353535"/><text x="256" y="608" style="font-weight:bold;font-size:11px;fill:#c2c2c2">Basic Properties</text>

<text x="274" y="628">Depth Of Field</text><text x="478" y="628" text-anchor="end">. . . . . . . . . . . . . . . . . . . .</text><use href="#cb" x="489" y="623.500"/>
<rect x="254" y="635" width="639" height="1" fill="#383838"/>
<text x="274" y="653" class="b">Motion Blur</text><text x="478" y="653" text-anchor="end">. . . . . . . . . . . . . . . . . . . . . . .</text><use href="#cb" x="489" y="648.500"/>
<text x="274" y="672" class="dim">Motion Subdivisions</text><text x="478" y="672" text-anchor="end" class="dim">. . . . . . . . . . . . . .</text>
<text x="274" y="692" class="dim">Deformation Subdivisions</text><text x="478" y="692" text-anchor="end" class="dim">. . . . . . . . . . .</text>
<text x="274" y="712" class="dim">Hair Subdivisions</text><text x="478" y="712" text-anchor="end" class="dim">. . . . . . . . . . . . . . . . .</text>
<rect class="fx" x="484" y="660" width="66" height="16" rx="2"/><text x="490" y="672" class="dim">4</text><use href="#spx" x="545" y="668"/>
<rect class="fx" x="484" y="680" width="66" height="16" rx="2"/><text x="490" y="692" class="dim">1</text><use href="#spx" x="545" y="688"/>
<rect class="fx" x="484" y="700" width="66" height="16" rx="2"/><text x="490" y="712" class="dim">1</text><use href="#spx" x="545" y="708"/>
<rect x="254" y="720" width="639" height="1" fill="#383838"/>
<use href="#ar" x="260" y="735"/><text x="274" y="739" class="b">Sampler</text><text x="478" y="739" text-anchor="end">. . . . . . . . . . . . . . . . . . . . . . . . .</text>
<rect class="dp" x="484" y="726" width="125" height="16" rx="4"/><text x="491" y="738" style="fill:#bcbcbc">Adaptive</text><use href="#dd" x="601" y="734"/>
<text x="274" y="758" class="b">Sampling Quality</text><text x="478" y="758" text-anchor="end">. . . . . . . . . . . . . . . . .</text>
<rect class="dp" x="484" y="745" width="125" height="16" rx="4"/><text x="491" y="757" style="fill:#bcbcbc">Medium</text><use href="#dd" x="601" y="753"/>
<text x="274" y="777" class="b" textLength="118">Sampling Subdivisions</text><text x="478" y="777" text-anchor="end">. . . . . . . . . . . .</text>
<rect class="fd" x="484" y="765" width="66" height="16" rx="2"/><text x="490" y="777">4</text><use href="#sp" x="545" y="773"/>
<text x="274" y="797" class="b">Shading Subdivisions (Min)</text><text x="478" y="797" text-anchor="end">. . . . . . . . .</text>
<rect class="fd" x="484" y="785" width="66" height="16" rx="2"/><text x="490" y="797">2</text><use href="#sp" x="545" y="793"/>
<text x="274" y="817" class="b">Shading Subdivisions (Max)</text><text x="478" y="817" text-anchor="end">. . . . . . . . .</text>
<rect class="fd" x="484" y="805" width="66" height="16" rx="2"/><text x="490" y="817">5</text><use href="#sp" x="545" y="813"/>
<text x="274" y="837">Shading Error Threshold</text><text x="478" y="837" text-anchor="end">. . . . . . . . . . . .</text>
<rect class="fd" x="484" y="825" width="66" height="16" rx="2"/><text x="490" y="837">5 %</text><use href="#sp" x="545" y="833"/>
<text x="274" y="856" class="b" textLength="150">Shading Transparency Check</text><text x="478" y="856" text-anchor="end">. . . . . . . .</text><use href="#ck" x="489" y="851.500"/>
<rect x="254" y="863" width="639" height="1" fill="#383838"/>
<text x="274" y="882" class="dim">HDR Threshold</text><text x="478" y="882" text-anchor="end" class="dim">. . . . . . . . . . . . . . . . . . .</text>
<rect class="fx" x="484" y="870" width="66" height="16" rx="2"/><text x="490" y="882" class="dim">8</text><use href="#spx" x="545" y="878"/>
<rect x="254" y="890" width="639" height="1" fill="#383838"/>
<text x="274" y="909" class="b" textLength="149">Blurriness Subdivision (Max)</text><text x="478" y="909" text-anchor="end">. . . . . . . .</text>
<rect class="fd" x="484" y="897" width="66" height="16" rx="2"/><text x="490" y="909">4</text><use href="#sp" x="545" y="905"/>
<text x="274" y="929" class="b">Shadow Subdivision (Max)</text><text x="478" y="929" text-anchor="end">. . . . . . . . . .</text>
<rect class="fd" x="484" y="917" width="66" height="16" rx="2"/><text x="490" y="929">4</text><use href="#sp" x="545" y="925"/>
<text x="274" y="948">Ambient Occlusion Subdivision (Max)</text>
<rect class="fd" x="484" y="937" width="66" height="16" rx="2"/><text x="490" y="949">2</text><use href="#sp" x="545" y="945"/>
</svg>
</body></html>
